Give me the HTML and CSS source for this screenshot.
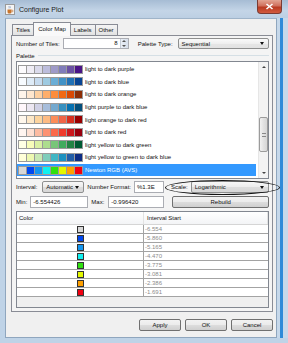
FILE: index.html
```html
<!DOCTYPE html>
<html lang="en">
  <head>
    <meta charset="UTF-8" />
    <title>Configure Plot</title>
    <link rel="stylesheet" href="styles.css">
  </head>
  <body>
    <div class="window">
      <div class="titlebar">
        <svg class="app-icon" width="10" height="11" viewBox="0 0 10 11">
          <rect x="0.5" y="0.5" width="9" height="10" fill="#f4f4f4" stroke="#9a9a9a" />
          <path d="M2.5 5.5h4v2.5a1.5 1.5 0 0 1-1.5 1.5h-1a1.5 1.5 0 0 1-1.5-1.5z" fill="#c8742c" />
          <path d="M6.5 6.2h0.8a0.8 0.8 0 0 1 0 1.6h-0.8" fill="none" stroke="#c8742c" stroke-width="0.7" />
          <path d="M4 2.2c-0.6 0.8 0.6 1.2 0 2.2M5.2 2c-0.6 0.8 0.6 1.2 0 2.2" fill="none" stroke="#5577aa" stroke-width="0.5" />
        </svg>
        <span class="title">Configure Plot</span>
        <div class="close-btn">
          <svg width="9" height="7" viewBox="0 0 9 7">
            <path d="M1.5 1l6 5M7.5 1l-6 5" stroke="#fff" stroke-width="1.6" />
          </svg>
        </div>
      </div>

      <div class="frame-body">
        <div class="client">
          <div class="tabs">
            <div class="tab">Titles</div>
            <div class="tab active">Color Map</div>
            <div class="tab">Labels</div>
            <div class="tab">Other</div>
          </div>

          <div class="panel">
            <div class="row row-tiles">
              <span class="label">Number of Tiles:</span>
              <div class="spinner">
                <span class="spin-value">8</span>
                <div class="spin-arrows">
                  <span class="spin-up"></span>
                  <span class="spin-down"></span>
                </div>
              </div>
              <span class="label palette-type">Palette Type:</span>
              <div class="combo combo-type">Sequential<span class="arrow"></span></div>
            </div>

            <div class="group-title"><span>Palette</span><div class="group-line"></div></div>

            <div class="list">
              <div class="list-rows" id="paletteList"></div>
              <div class="scrollbar">
                <div class="scroll-btn"><span class="tri-up"></span></div>
                <div class="scroll-track">
                  <div class="thumb"><span class="grip"></span></div>
                </div>
                <div class="scroll-btn"><span class="tri-down"></span></div>
              </div>
            </div>

            <div class="row row-interval">
              <span class="label">Interval:</span>
              <div class="combo combo-interval">Automatic<span class="arrow"></span></div>
              <span class="label fmt-label">Number Format:</span>
              <div class="field fmt-field">%1.3E</div>
              <span class="label scale-label">Scale:</span>
              <div class="combo combo-scale">Logarithmic<span class="arrow"></span></div>
            </div>

            <div class="row row-minmax">
              <span class="label">Min:</span>
              <div class="field min-field">-6.554426</div>
              <span class="label max-label">Max:</span>
              <div class="field max-field">-0.996420</div>
              <div class="btn rebuild">Rebuild</div>
            </div>

            <div class="table">
              <div class="table-head">
                <div class="th">Color</div>
                <div class="th th-interval">Interval Start</div>
              </div>
              <div id="intervalRows"></div>
            </div>
          </div>

          <div class="buttons">
            <div class="btn">Apply</div>
            <div class="btn">OK</div>
            <div class="btn">Cancel</div>
          </div>
        </div>
        <div class="frame-right"></div>
      </div>

      <div class="ellipse"></div>
    </div>

    <script>
      const palettes = [
        ["light to dark purple", ["#fcfbfd", "#efedf5", "#dadaeb", "#bcbddc", "#9e9ac8", "#807dba", "#6a51a3", "#4a1486"]],
        ["light to dark blue", ["#f7fbff", "#deebf7", "#c6dbef", "#9ecae1", "#6baed6", "#4292c6", "#2171b5", "#084594"]],
        ["light to dark orange", ["#fff5eb", "#fee6ce", "#fdd0a2", "#fdae6b", "#fd8d3c", "#f16913", "#d94801", "#8c2d04"]],
        ["light purple to dark blue", ["#fff7fb", "#ece7f2", "#d0d1e6", "#a6bddb", "#74a9cf", "#3690c0", "#0570b0", "#034e7b"]],
        ["light orange to dark red", ["#fff7ec", "#fee8c8", "#fdd49e", "#fdbb84", "#fc8d59", "#ef6548", "#d7301f", "#990000"]],
        ["light to dark red", ["#fff5f0", "#fee0d2", "#fcbba1", "#fc9272", "#fb6a4a", "#ef3b2c", "#cb181d", "#99000d"]],
        ["light yellow to dark green", ["#ffffe5", "#f7fcb9", "#d9f0a3", "#addd8e", "#78c679", "#41ab5d", "#238443", "#005a32"]],
        ["light yellow to green to dark blue", ["#ffffd9", "#edf8b1", "#c7e9b4", "#7fcdbb", "#41b6c4", "#1d91c0", "#225ea8", "#0c2c84"]],
        ["Newton RGB (AVS)", ["#d8d8d8", "#0048f0", "#1496f0", "#10f0f0", "#30e010", "#e4f800", "#ffa000", "#f00010"]]
      ];

      const intervals = ["-6.554", "-5.860", "-5.165", "-4.470", "-3.775", "-3.081", "-2.386", "-1.691"];

      let list = document.getElementById("paletteList");
      palettes.forEach(function (p, i) {
        let cells = p[1].map(c => `<span class="cell" style="background:${c}"></span>`).join("");
        let cls = i === palettes.length - 1 ? "list-row selected" : "list-row";
        list.innerHTML += `<div class="${cls}"><span class="strip">${cells}</span><span class="name">${p[0]}</span></div>`;
      });

      let rows = document.getElementById("intervalRows");
      let newton = palettes[palettes.length - 1][1];
      intervals.forEach(function (v, i) {
        rows.innerHTML += `<div class="tr"><div class="td td-color"><span class="swatch" style="background:${newton[i]}"></span></div><div class="td td-value">${v}</div></div>`;
      });
    </script>
  </body>
</html>
```

FILE: styles.css
```css
* {
  box-sizing: border-box;
}

body {
  margin: 0;
  background: #ffffff;
  font-family: "Liberation Sans", Arial, sans-serif;
  font-size: 6px;
  color: #111;
}

.window {
  position: relative;
  width: 288px;
  height: 343px;
  display: flex;
  flex-direction: column;
  background: #bfd3e7;
  overflow: hidden;
}

/* title bar */
.titlebar {
  height: 20px;
  display: flex;
  align-items: center;
  padding-left: 5px;
  background: linear-gradient(#a6bcd4, #c4d5e7 60%, #bccfe3);
}

.app-icon {
  display: block;
}

.title {
  font-size: 7px;
  margin-left: 4px;
  color: #1a1a1a;
}

.close-btn {
  margin-left: auto;
  margin-right: 6px;
  align-self: flex-start;
  width: 25px;
  height: 14px;
  display: flex;
  align-items: center;
  justify-content: center;
  border: 1px solid #7a3b33;
  border-top: none;
  border-radius: 0 0 4px 4px;
  background: linear-gradient(#e2a493, #d0705d 45%, #b93a22 55%, #d25a3e);
}

/* frame */
.frame-body {
  flex: 1;
  display: flex;
  padding: 0 0 5px 5px;
}

.client {
  width: 272px;
  background: #f0f0f0;
  padding: 3px 3px 6px 5px;
  display: flex;
  flex-direction: column;
  border: 1px solid #8fa6be;
  border-top-color: #9fb4c9;
}

.frame-right {
  flex: 1;
  background: linear-gradient(to right, #c6d8ea 0 3px, #2f8ad8 3px 6px, #c6d8ea 6px);
}

/* tabs */
.tabs {
  height: 13px;
  display: flex;
  align-items: flex-end;
  padding-left: 1px;
}

.tab {
  height: 11px;
  padding: 0 3px;
  margin-right: -1px;
  display: flex;
  align-items: center;
  border: 1px solid #898c95;
  border-bottom: none;
  background: linear-gradient(#f4f4f4, #e2e2e2);
}

.tab.active {
  position: relative;
  z-index: 1;
  height: 14px;
  margin-bottom: -1px;
  padding: 0 4px 2px;
  background: #f9f9f9;
}

.panel {
  height: 277px;
  border: 1px solid #898c95;
  background: #f4f4f4;
  padding: 2px 3px 3px 4px;
  display: flex;
  flex-direction: column;
}

/* form rows */
.row {
  display: flex;
  align-items: center;
}

.row-tiles {
  height: 11px;
}

.label {
  white-space: nowrap;
}

.spinner {
  width: 66px;
  height: 11px;
  margin-left: 3px;
  display: flex;
  border: 1px solid #abadb3;
  background: #ffffff;
}

.spin-value {
  flex: 1;
  text-align: right;
  padding-right: 2px;
  line-height: 9px;
}

.spin-arrows {
  width: 8px;
  display: flex;
  flex-direction: column;
  background: linear-gradient(to right, #e9eef5, #d7e0ec);
  border-left: 1px solid #c5ccd6;
}

.spin-up,
.spin-down {
  flex: 1;
  display: flex;
  align-items: center;
  justify-content: center;
}

.spin-up::after {
  content: "";
  border: 2px solid transparent;
  border-top: none;
  border-bottom: 2px solid #555;
}

.spin-down::after {
  content: "";
  border: 2px solid transparent;
  border-bottom: none;
  border-top: 2px solid #555;
}

.palette-type {
  margin-left: 9px;
}

.combo {
  height: 11px;
  display: flex;
  align-items: center;
  padding-left: 3px;
  border: 1px solid #8e8f8f;
  border-radius: 2px;
  background: linear-gradient(#f7f7f7, #ececec 50%, #dddddd 51%, #d7d7d7);
}

.combo .arrow {
  margin-left: auto;
  margin-right: 4px;
  border: 2.5px solid transparent;
  border-bottom: none;
  border-top: 3px solid #111;
}

.combo-type {
  flex: 1;
  margin-left: 5px;
  background: linear-gradient(#fafafa, #efefef 50%, #e6e6e6 51%, #e2e2e2);
}

/* palette list */
.group-title {
  height: 11px;
  margin-top: 1px;
  display: flex;
  align-items: center;
}

.group-line {
  flex: 1;
  margin-left: 3px;
  border-top: 1px solid #d5dfe5;
}

.list {
  height: 118px;
  display: flex;
  border: 1px solid #828790;
  background: #ffffff;
}

.list-rows {
  flex: 1;
  padding-top: 1px;
}

.list-row {
  height: 12.6px;
  display: flex;
  align-items: center;
  padding-left: 1px;
  margin-right: 2px;
}

.list-row.selected {
  background: #3399ff;
  color: #ffffff;
}

.strip {
  height: 9px;
  display: flex;
  gap: 1px;
  padding: 1px;
  background: #9a9a9a;
}

.cell {
  width: 7px;
}

.name {
  margin-left: 2px;
}

.scrollbar {
  width: 10px;
  display: flex;
  flex-direction: column;
  background: #f3f3f3;
  border-left: 1px solid #e6e6e6;
}

.scroll-btn {
  height: 10px;
  display: flex;
  align-items: center;
  justify-content: center;
}

.tri-up {
  border: 2px solid transparent;
  border-top: none;
  border-bottom: 2px solid #444;
}

.tri-down {
  border: 2px solid transparent;
  border-bottom: none;
  border-top: 2px solid #444;
}

.scroll-track {
  flex: 1;
}

.thumb {
  height: 35px;
  margin: 45px 0 0;
  display: flex;
  align-items: center;
  justify-content: center;
  border: 1px solid #9b9b9b;
  border-radius: 2px;
  background: linear-gradient(to right, #f2f2f2, #e2e2e2 50%, #d6d6d6);
}

.grip {
  width: 4px;
  height: 4px;
  border-top: 1px solid #888;
  border-bottom: 1px solid #888;
}

/* interval / min / max */
.row-interval {
  height: 12px;
  margin-top: 2px;
}

.combo-interval {
  width: 42px;
  height: 12px;
  margin-left: 5px;
}

.fmt-label {
  margin-left: 3px;
}

.field {
  height: 12px;
  display: flex;
  align-items: center;
  padding-left: 2px;
  border: 1px solid #abadb3;
  background: #ffffff;
}

.fmt-field {
  width: 30px;
  margin-left: 3px;
}

.scale-label {
  margin-left: 7px;
}

.combo-scale {
  width: 78px;
  height: 12px;
  margin-left: 3px;
}

.row-minmax {
  height: 12px;
  margin-top: 3px;
}

.min-field {
  width: 58px;
  margin-left: 3px;
}

.max-label {
  margin-left: 3px;
}

.max-field {
  width: 56px;
  margin-left: 4px;
}

.btn {
  height: 12px;
  display: flex;
  align-items: center;
  justify-content: center;
  border: 1px solid #707070;
  border-radius: 2px;
  background: linear-gradient(#f2f2f2, #ebebeb 50%, #dddddd 51%, #cfcfcf);
}

.rebuild {
  flex: 1;
  margin-left: 8px;
}

/* interval table */
.table {
  height: 97px;
  margin-top: 3px;
  border: 1px solid #828790;
  background: #efefef;
}

.table-head {
  height: 13px;
  display: grid;
  grid-template-columns: 127px 1fr;
  background: linear-gradient(#ffffff, #f3f4f6);
  border-bottom: 1px solid #d5d5d5;
}

.th {
  display: flex;
  align-items: center;
  padding-left: 2px;
  border-right: 1px solid #e3e3e3;
}

.th-interval {
  padding-left: 3px;
}

.tr {
  height: 9px;
  display: grid;
  grid-template-columns: 127px 1fr;
  background: #ffffff;
  border-bottom: 1px solid #a3a3a3;
}

.td {
  display: flex;
  align-items: center;
}

.td-color {
  justify-content: center;
  border-right: 1px solid #a3a3a3;
}

.swatch {
  width: 7px;
  height: 7px;
  border: 1px solid #333;
}

.td-value {
  padding-left: 1px;
  color: #8c8c8c;
}

/* dialog buttons */
.buttons {
  height: 12px;
  margin-top: 7px;
  display: flex;
  justify-content: flex-end;
  gap: 4px;
}

.buttons .btn {
  width: 42px;
}

/* hand-drawn annotation round the Scale box */
.ellipse {
  position: absolute;
  left: 165px;
  top: 180px;
  width: 115px;
  height: 15px;
  border: 1.3px solid #111;
  border-radius: 50%;
}
```
